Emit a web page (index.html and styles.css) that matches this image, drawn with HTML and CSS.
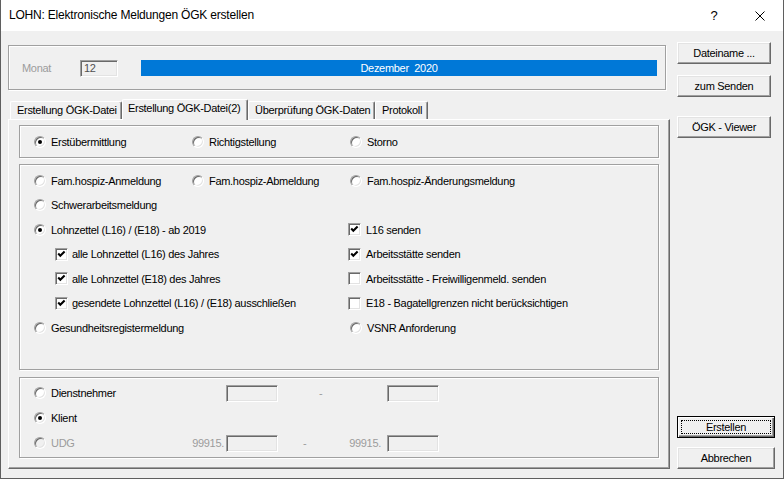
FILE: index.html
```html
<!DOCTYPE html>
<html lang="de">
<head>
<meta charset="utf-8">
<title>LOHN: Elektronische Meldungen ÖGK erstellen</title>
<link rel="stylesheet" href="styles.css">
</head>
<body>
<div class="window">
  <div class="titlebar">
    <span class="title">LOHN: Elektronische Meldungen ÖGK erstellen</span>
    <span class="tb-btn help">?</span>
    <span class="tb-btn close"><svg width="10" height="10" viewBox="0 0 10 10"><path d="M0.5 0.5 L9.5 9.5 M9.5 0.5 L0.5 9.5" stroke="#000" stroke-width="1" fill="none"/></svg></span>
  </div>
  <div class="body">
    <div class="main">
      <div class="group top-group">
        <span class="monat disabled">Monat</span>
        <span class="field month">12</span>
        <div class="monthbar">Dezember&nbsp;&nbsp;2020</div>
      </div>
      <div class="tabs">
        <div class="tab t1">Erstellung ÖGK-Datei</div>
        <div class="tab t2 active">Erstellung ÖGK-Datei(2)</div>
        <div class="tab t3">Überprüfung ÖGK-Daten</div>
        <div class="tab t4">Protokoll</div>
      </div>
      <div class="panel">
        <div class="group g1 optgrid">
          <label class="opt c1"><span class="radio checked"></span>Erstübermittlung</label>
          <label class="opt c2"><span class="radio"></span>Richtigstellung</label>
          <label class="opt c3 shift"><span class="radio"></span>Storno</label>
        </div>
        <div class="group g2 optgrid">
          <label class="opt c1"><span class="radio"></span>Fam.hospiz-Anmeldung</label>
          <label class="opt c2"><span class="radio"></span>Fam.hospiz-Abmeldung</label>
          <label class="opt c3 shift"><span class="radio"></span>Fam.hospiz-Änderungsmeldung</label>
          <label class="opt call"><span class="radio"></span>Schwerarbeitsmeldung</label>
          <label class="opt c12"><span class="radio checked"></span>Lohnzettel (L16) / (E18) - ab 2019</label>
          <label class="opt c3"><span class="check on"><svg width="13" height="13" viewBox="0 0 13 13"><path d="M3.2 5.6 L5.3 7.7 L9.6 3.4" stroke="#000" stroke-width="2.1" fill="none"/></svg></span>L16 senden</label>
          <label class="opt c12 indent"><span class="check on"><svg width="13" height="13" viewBox="0 0 13 13"><path d="M3.2 5.6 L5.3 7.7 L9.6 3.4" stroke="#000" stroke-width="2.1" fill="none"/></svg></span>alle Lohnzettel (L16) des Jahres</label>
          <label class="opt c3"><span class="check on"><svg width="13" height="13" viewBox="0 0 13 13"><path d="M3.2 5.6 L5.3 7.7 L9.6 3.4" stroke="#000" stroke-width="2.1" fill="none"/></svg></span>Arbeitsstätte senden</label>
          <label class="opt c12 indent"><span class="check on"><svg width="13" height="13" viewBox="0 0 13 13"><path d="M3.2 5.6 L5.3 7.7 L9.6 3.4" stroke="#000" stroke-width="2.1" fill="none"/></svg></span>alle Lohnzettel (E18) des Jahres</label>
          <label class="opt c3"><span class="check"></span>Arbeitsstätte - Freiwilligenmeld. senden</label>
          <label class="opt c12 indent"><span class="check on"><svg width="13" height="13" viewBox="0 0 13 13"><path d="M3.2 5.6 L5.3 7.7 L9.6 3.4" stroke="#000" stroke-width="2.1" fill="none"/></svg></span>gesendete Lohnzettel (L16) / (E18) ausschließen</label>
          <label class="opt c3"><span class="check"></span>E18 - Bagatellgrenzen nicht berücksichtigen</label>
          <label class="opt c12"><span class="radio"></span>Gesundheitsregistermeldung</label>
          <label class="opt c3 shift"><span class="radio"></span>VSNR Anforderung</label>
        </div>
        <div class="group g3">
          <div class="row3">
            <label class="opt lead"><span class="radio"></span>Dienstnehmer</label>
            <span class="pre"></span>
            <span class="field range"></span>
            <span class="dash d1 disabled">-</span>
            <span class="pre2"></span>
            <span class="field range"></span>
          </div>
          <div class="row3">
            <label class="opt lead"><span class="radio checked"></span>Klient</label>
          </div>
          <div class="row3">
            <label class="opt lead disabled"><span class="radio off"></span>UDG</label>
            <span class="pre disabled">99915.</span>
            <span class="field range"></span>
            <span class="dash d3 disabled">-</span>
            <span class="pre2 disabled">99915.</span>
            <span class="field range"></span>
          </div>
        </div>
      </div>
    </div>
    <div class="side">
      <button class="btn b1">Dateiname ...</button>
      <button class="btn b2">zum Senden</button>
      <button class="btn b3">ÖGK - Viewer</button>
      <button class="btn wide b4 default"><span class="focus">Erstellen</span></button>
      <button class="btn wide b5">Abbrechen</button>
    </div>
  </div>
</div>
</body>
</html>
```
FILE: styles.css
```css
* { box-sizing: border-box; }
html, body { margin: 0; padding: 0; }
body {
  width: 784px;
  height: 479px;
  overflow: hidden;
  background: #f0f0f0;
  font-family: "Liberation Sans", Arial, sans-serif;
  font-size: 11px;
  letter-spacing: -0.3px;
  color: #000;
}
.window {
  width: 784px;
  height: 479px;
  border-left: 1px solid #5f5f5f;
  border-right: 1px solid #5f5f5f;
  border-bottom: 1px solid #5f5f5f;
  display: flex;
  flex-direction: column;
  background: #f0f0f0;
}
.titlebar {
  height: 31px;
  flex: none;
  background: #fff;
  display: flex;
  align-items: center;
  padding-left: 8px;
}
.title {
  font-family: "Liberation Sans", Arial, sans-serif;
  font-size: 12px;
  letter-spacing: -0.2px;
  flex: 1;
  padding-bottom: 1px;
}
.tb-btn {
  width: 46px;
  height: 30px;
  display: flex;
  align-items: center;
  justify-content: center;
  font-size: 13px;
  letter-spacing: 0;
}
.close svg { display: block; }

.body {
  flex: 1;
  display: flex;
  padding: 0 0 10px 7px;
}
.main {
  width: 662px;
  padding-top: 14px;
  display: flex;
  flex-direction: column;
}
.group {
  border: 1px solid #a0a0a0;
  box-shadow: inset 1px 1px 0 #fff, 1px 1px 0 #fff;
}
.disabled { color: #9c9c9c; }

.top-group {
  width: 658px;
  height: 45px;
  display: flex;
  align-items: flex-start;
  padding: 14px 7px 0 13px;
}
.monat {
  width: 58px;
  line-height: 17px;
}
.field {
  display: block;
  height: 17px;
  background: #f0f0f0;
  border: 1px solid;
  border-color: #a0a0a0 #fff #fff #a0a0a0;
  box-shadow: inset 1px 1px 0 #696969, inset -1px -1px 0 #e3e3e3;
}
.month {
  width: 38px;
  line-height: 15px;
  padding-left: 3px;
  color: #505050;
}
.monthbar {
  margin-left: 23px;
  width: 516px;
  height: 16px;
  background: #0078d7;
  color: #fff;
  text-align: center;
  line-height: 16px;
}

.tabs {
  margin-top: 9px;
  height: 20px;
  display: flex;
  align-items: flex-end;
  padding-left: 2px;
}
.tab {
  height: 18px;
  line-height: 16px;
  padding-left: 6px;
  white-space: nowrap;
  border-top: 1px solid #fff;
  border-left: 1px solid #fff;
  border-right: 1px solid #696969;
  box-shadow: inset -1px 0 0 #a0a0a0;
  border-radius: 2px 2px 0 0;
}
.t1 { width: 112px; }
.t2 { width: 126px; }
.t3 { width: 127px; }
.t4 { width: 53px; }
.tab.active {
  height: 21px;
  margin-bottom: -1px;
  background: #f0f0f0;
  position: relative;
  z-index: 1;
  line-height: 17px;
  padding-left: 5px;
}

.panel {
  width: 662px;
  height: 350px;
  border-top: 1px solid #fff;
  border-left: 1px solid #fff;
  border-right: 1px solid #696969;
  border-bottom: 1px solid #696969;
  box-shadow: inset -1px -1px 0 #a0a0a0;
  padding: 5px 10px 0 10px;
  display: flex;
  flex-direction: column;
}

.optgrid {
  display: grid;
  grid-template-columns: 158px 156px 1fr;
  grid-auto-rows: 24.5px;
  padding-left: 14px;
}
.g1 { height: 33px; padding-top: 4px; grid-auto-rows: 24px; }
.g2 { height: 206px; margin-top: 6px; padding-top: 3.5px; }
.g3 { height: 81px; margin-top: 7px; padding: 2.5px 0 0 14px; }

.opt {
  display: flex;
  align-items: center;
  white-space: nowrap;
  gap: 5px;
}
.c1 { grid-column: 1; }
.c2 { grid-column: 2; }
.c3 { grid-column: 3; }
.c12 { grid-column: 1 / 3; }
.call { grid-column: 1 / 4; }
.shift { padding-left: 2px; }
.indent { padding-left: 21px; gap: 4px; }

.radio {
  flex: none;
  position: relative;
  width: 12px;
  height: 12px;
  border-radius: 50%;
  background: #fff;
  border: 1px solid;
  border-color: #a0a0a0 #fff #fff #a0a0a0;
  box-shadow: inset 1px 1px 0 #696969, inset -1px -1px 0 #e3e3e3;
}
.radio.off { background: #f0f0f0; }
.radio.checked::after {
  content: "";
  position: absolute;
  left: 3px;
  top: 3px;
  width: 4px;
  height: 4px;
  border-radius: 50%;
  background: #000;
}
.check {
  flex: none;
  width: 13px;
  height: 13px;
  background: #fff;
  border: 1px solid;
  border-color: #a0a0a0 #fff #fff #a0a0a0;
  box-shadow: inset 1px 1px 0 #696969, inset -1px -1px 0 #e3e3e3;
  position: relative;
}
.check svg {
  position: absolute;
  left: -1px;
  top: -1px;
}

.row3 {
  height: 25px;
  display: flex;
  align-items: center;
}
.lead { width: 152px; }
.pre {
  width: 38px;
  margin-right: 2px;
  text-align: right;
}
.range { width: 52px; }
.dash { width: 69px; }
.d1 { padding-left: 41px; }
.d3 { padding-left: 25px; }
.pre2 {
  width: 34px;
  margin-right: 6px;
  text-align: right;
}

.side {
  margin-left: 7px;
  padding-top: 11px;
  display: flex;
  flex-direction: column;
  align-items: flex-start;
}
.btn {
  font-family: "Liberation Sans", Arial, sans-serif;
  font-size: 11px;
  letter-spacing: -0.3px;
  color: #000;
  width: 94px;
  height: 22px;
  padding: 0;
  background: #f0f0f0;
  border: 1px solid;
  border-color: #fff #696969 #696969 #fff;
  box-shadow: inset -1px -1px 0 #a0a0a0, inset 1px 1px 0 #e3e3e3;
  display: flex;
  align-items: center;
  justify-content: center;
}
.b2 { margin-top: 11px; }
.b3 { margin-top: 19px; }
.wide { width: 98px; }
.b4 { margin-top: auto; }
.b5 { margin-top: 9px; }
.btn.default {
  border: 1px solid #000;
  box-shadow: inset 1px 1px 0 #fff, inset -1px -1px 0 #696969, inset -2px -2px 0 #a0a0a0;
  padding: 3px;
}
.focus {
  flex: 1;
  align-self: stretch;
  display: flex;
  align-items: center;
  justify-content: center;
  border: 1px dotted #000;
}
```
